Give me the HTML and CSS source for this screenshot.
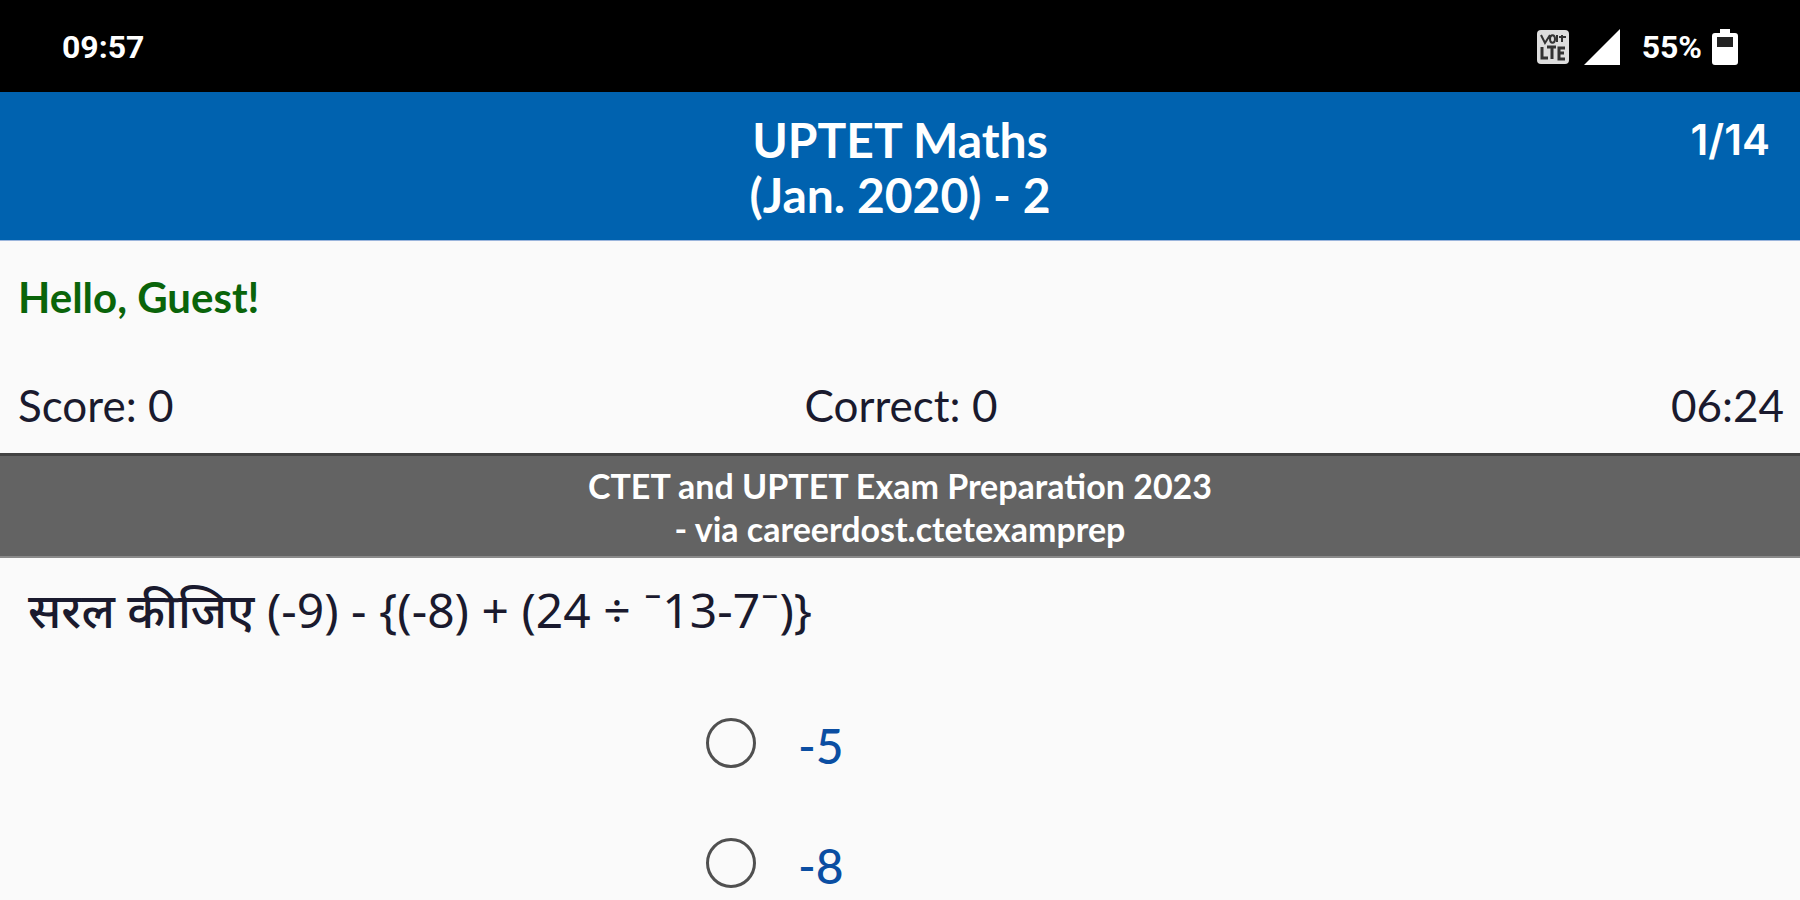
FILE: index.html
```html
<!DOCTYPE html>
<html lang="en">
<head>
	<meta charset="utf-8">
	<meta name="viewport" content="width=device-width, initial-scale=1">
	<link rel="stylesheet" href="styles.css">
	<title>UPTET Maths (Jan. 2020) - 2</title>
</head>
<body>
	<div class="status">
		<span>09:57</span>
		<div class="status-icons">
			<svg class="volte" width="34" height="36" viewBox="0 0 34 36">
				<rect x="1" y="1" width="32" height="34" rx="4" fill="#ddd"/>
				<g fill="none" stroke="#333" stroke-width="2">
					<path d="M5 6l4 8 5-8M14 10a2 3 0 1 0 5 0a2 3 0 1 0-5 0M21 6v7M23 8h7M26 6v7"/>
					<path d="M6 18v11h6M11 18h9M16 18v12M29 19h-6v11h6M23 24h5" stroke-width="3"/>
				</g>
			</svg>
			<svg class="signal" width="36" height="36" viewBox="0 0 36 36">
				<path d="M0 36L36 0v36z" fill="#fff"/>
			</svg>
			<span>55%</span>
			<svg width="26" height="36" viewBox="0 0 26 36">
				<path d="M8 0h10v4h5a3 3 0 0 1 3 3v26a3 3 0 0 1-3 3H3a3 3 0 0 1-3-3V7a3 3 0 0 1 3-3h5z" fill="#fff"/>
				<path d="M5 8h16v10H5z" fill="#222"/>
			</svg>
		</div>
	</div>
	<header class="header">
		<h1 class="title">UPTET Maths<br>(Jan. 2020) - 2</h1>
		<span class="page">1/14</span>
	</header>
	<main>
		<p class="hello">Hello, Guest!</p>
		<div class="stats">
			<span>Score: 0</span>
			<span>Correct: 0</span>
			<span class="time">06:24</span>
		</div>
		<div class="banner">CTET and UPTET Exam Preparation 2023<br>- via careerdost.ctetexamprep</div>
		<form>
			<p class="question" id="question"><span class="hindi" lang="hi">सरल कीजिए</span> (-9) - {(-8) + (24 ÷ <span class="bar">¯</span>13-7<span class="bar">¯</span>)}</p>
			<div class="options" role="radiogroup" aria-labelledby="question">
				<label class="option"><input type="radio" name="answer" value="-5">-5</label>
				<label class="option"><input type="radio" name="answer" value="-8">-8</label>
			</div>
		</form>
	</main>
</body>
</html>
```
FILE: styles.css
```css
body {
	margin: 0;
	background-color: #fafafa;
	color: #1a1a2e;
	font-family: Lato, "Noto Sans", sans-serif;
	font-size: 44px;
	line-height: 56px
}

p, h1 {
	margin: 0
}

.status {
	display: flex;
	justify-content: space-between;
	align-items: center;
	height: 90px;
	padding: 2px 62px 0;
	background-color: #000;
	color: #fff;
	font-family: Roboto, sans-serif;
	font-size: 32px;
	font-weight: bold
}

.status-icons {
	display: flex;
	align-items: center;
	gap: 10px
}

.volte {
	margin-right: 4px
}

.signal {
	margin-right: 12px
}

.header {
	display: grid;
	grid-template-columns: 1fr auto 1fr;
	padding: 20px 30px 18px;
	background-color: #0062af;
	border-bottom: 1px solid #9bb5dc;
	color: #fff
}

.title {
	grid-column: 2;
	font-size: 48px;
	font-weight: bold;
	line-height: 55px;
	text-align: center
}

.page {
	justify-self: end;
	font-family: Inter, sans-serif;
	font-size: 42px;
	font-weight: 600
}

.hello {
	padding: 28px 18px 0;
	color: #0a640a;
	font-size: 42px;
	font-weight: bold
}

.stats {
	display: grid;
	grid-template-columns: 1fr auto 1fr;
	padding: 52px 16px 20px 18px
}

.time {
	justify-self: end
}

.banner {
	padding: 8px 0 6px;
	background-color: #636363;
	border-top: 3px solid #424242;
	border-bottom: 2px solid #8a8a8a;
	color: #fff;
	font-size: 34px;
	font-weight: bold;
	line-height: 43px;
	text-align: center
}

.question {
	padding: 24px 28px 0;
	font-family: "Noto Sans", sans-serif;
	font-size: 48px
}

.hindi {
	font-weight: 500
}

.bar {
	font-family: Lato, sans-serif
}

.options {
	display: flex;
	flex-direction: column;
	gap: 70px;
	width: 388px;
	margin: 0 auto;
	padding: 80px 0 10px
}

.option {
	display: flex;
	align-items: flex-start;
	gap: 42px;
	height: 50px;
	color: #0b4ea2;
	font-size: 48px;
	font-weight: 500
}

.option input {
	appearance: none;
	width: 50px;
	height: 50px;
	margin: 0;
	border: 3px solid #505050;
	border-radius: 50%
}

.option input:checked {
	background: radial-gradient(#0b4ea2 50%, transparent 55%)
}
```
